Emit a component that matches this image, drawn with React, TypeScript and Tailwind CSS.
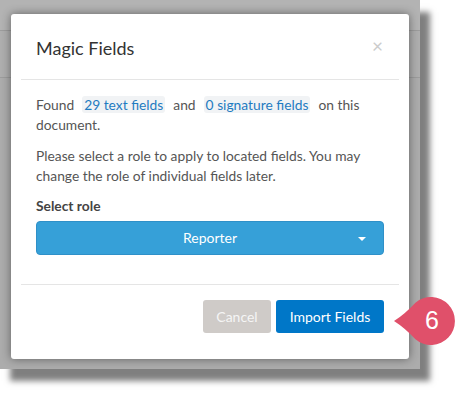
import React from "react";

const Chip = ({ children }: { children: React.ReactNode }) => (
  <span className="mx-[8px] inline-block rounded-[3px] bg-[#f1f3f5] px-[2px] leading-[17px] text-[#1f7bc1]">{children}</span>
);

const Callout = () => (
  <div className="absolute left-[393px] top-[296px] h-[50px] w-[64px]">
    <svg width="64" height="50" viewBox="0 0 64 50" className="absolute inset-0">
      <path
        d="M1 25 Q 12 18 22.4 6.7 A 24 24 0 1 1 22.4 43.3 Q 12 32 1 25 Z"
        fill="#e0506a"
      />
    </svg>
    <span className="absolute left-[27px] top-[9px] w-[24px] text-center font-['Liberation_Sans',sans-serif] text-[25px] leading-[30px] text-white">
      6
    </span>
  </div>
);

export default function App() {
  return (
    <div className="relative h-[393px] w-[457px] bg-white font-['Lato','Noto_Sans',sans-serif]">
      <div className="h-[369px] w-[420px] bg-[linear-gradient(to_bottom,#b3b3b3_0px,#b3b3b3_30px,#9c9c9c_30px,#9c9c9c_31px,#aeaeae_31px,#aeaeae_77px,#9c9c9c_77px,#9c9c9c_78px,#acacac_78px)] pl-[11px] pt-[14px] shadow-[10px_12px_6px_rgba(0,0,0,0.5)]">
        <div className="flex h-[345px] w-[398px] flex-col rounded-[3px] bg-white shadow-[0_0_10px_rgba(0,0,0,0.45)]">
          <div className="mx-[10px] flex h-[66px] shrink-0 items-center justify-between border-b border-[#e5e5e5] pl-[15px] pr-[16px]">
            <h1 className="pt-[4px] text-[18px] text-[#333]">Magic Fields</h1>
            <span className="pb-[2px] text-[19px] leading-none text-[#cccccc]">×</span>
          </div>
          <div className="mx-[25px] flex-1 pt-[15px] text-[13.8px] leading-[20px] text-[#555]">
            <p>
              Found<Chip>29 text fields</Chip>and<Chip>0 signature fields</Chip>on this document.
            </p>
            <p className="mt-[11px] leading-[19.5px]">
              Please select a role to apply to located fields. You may change the role of individual fields later.
            </p>
            <p className="mt-[11px] font-bold text-[#444]">Select role</p>
            <button className="relative mt-[5px] flex h-[34px] w-full items-center justify-center rounded-[4px] border border-[#2f90c8] bg-[#36a0d8] text-[14px] text-white">
              Reporter
              <svg width="8" height="4" viewBox="0 0 8 4" className="absolute right-[17px] top-[15px]">
                <path d="M0 0 L8 0 L4 4 Z" fill="white" />
              </svg>
            </button>
          </div>
          <div className="mx-[10px] flex h-[75px] shrink-0 items-start justify-end gap-[5px] border-t border-[#e5e5e5] pr-[15px] pt-[15px]">
            <button className="h-[33px] w-[68px] rounded-[3px] bg-[#cfcbc8] text-[14px] text-[#f5f5f5]">Cancel</button>
            <button className="h-[33px] w-[108px] rounded-[3px] bg-[#0077c8] text-[14px] text-white">Import Fields</button>
          </div>
        </div>
      </div>
      <Callout />
    </div>
  );
}
